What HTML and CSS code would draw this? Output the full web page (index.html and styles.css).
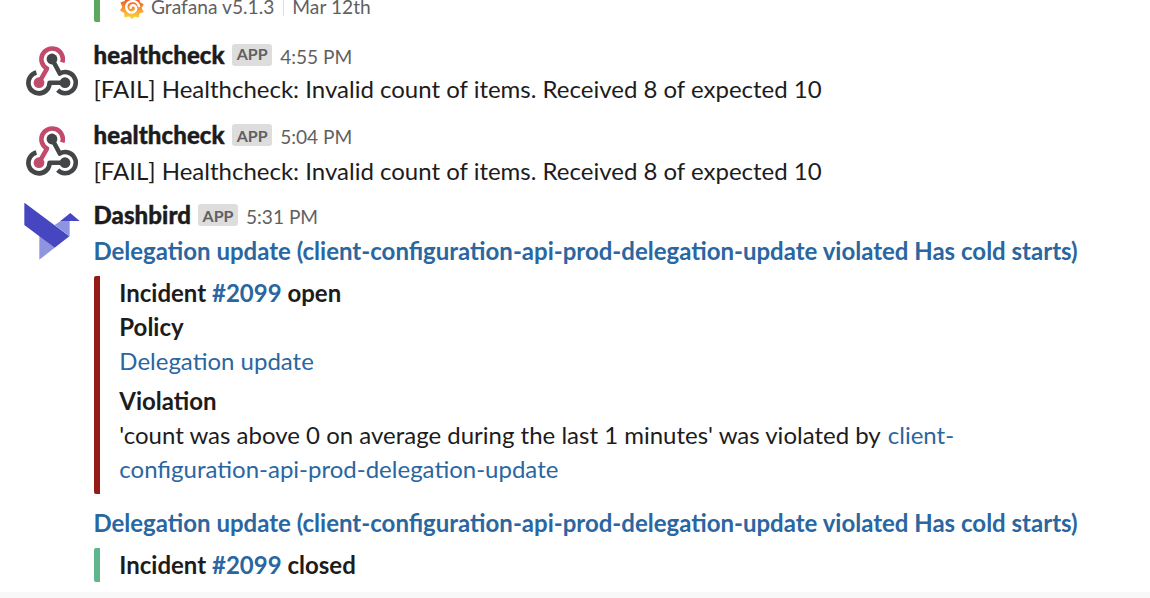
FILE: index.html
```html
<!DOCTYPE html>
<html lang="en">
<head>
<meta charset="utf-8">
<title>Alerts channel</title>
<link rel="stylesheet" href="styles.css">
</head>
<body>
<svg class="defs" width="0" height="0" aria-hidden="true">
  <symbol id="webhook" viewBox="0 0 56 56">
    <g fill="none" stroke-width="4.6" stroke-linejoin="round">
      <path stroke="#c24b6c" d="M38.300 18.400A10.700 10.700 0 1 0 23 24.600L15 38.700"/>
      <path stroke="#444546" d="M12.400 28.500A10.600 10.600 0 1 0 25.600 38.700H41"/>
      <path stroke="#444546" d="M33.700 46.200A10.600 10.600 0 1 0 35.800 29.500L28 15"/>
    </g>
    <circle cx="15" cy="38.700" r="5.400" fill="#c24b6c"/>
    <circle cx="28" cy="15" r="5.400" fill="#444546"/>
    <circle cx="41" cy="38.700" r="5.400" fill="#444546"/>
  </symbol>
</svg>
<main class="channel">
  <div class="attachment grafana">
    <svg class="grafana-logo" viewBox="0 0 24 24">
      <defs><linearGradient id="sun" x1="0" y1="0" x2="0" y2="1"><stop offset="0.200" stop-color="#ee5a2b"/><stop offset="1" stop-color="#fcdb3a"/></linearGradient></defs>
      <path fill="url(#sun)" d="M12 0l2.5 3.2 5-1 .3 4.8 4 2.5-2.200 3.500 2.200 4-4.200 1.500-.8 4.300-4-1L12 24l-3-2.400-4.500.8-.3-4.300L0 15.500l2.300-3.600L.5 7.500l4.200-1.600.8-4.200 4 1z"/>
      <path fill="none" stroke="#fff" stroke-width="2.500" stroke-linecap="round" d="M19 11C18 7.500 14.700 5.600 11.600 6.100 8 6.700 5.900 9.500 6.300 12.800c.4 3 3 5.100 5.900 4.700 2.500-.3 4.200-2.300 3.900-4.500-.3-1.900-2-3-3.700-2.700-1.300.2-2 1.300-1.700 2.400"/>
    </svg>
    <span>Grafana v5.1.3</span><span class="divider"></span><span>Mar 12th</span>
  </div>

  <article class="message first">
    <svg class="avatar"><use href="#webhook"/></svg>
    <div class="content">
      <header class="meta"><b class="name">healthcheck</b><span class="badge">APP</span><time>4:55 PM</time></header>
      <p class="text">[FAIL] Healthcheck: Invalid count of items. Received 8 of expected 10</p>
    </div>
  </article>

  <article class="message second">
    <svg class="avatar"><use href="#webhook"/></svg>
    <div class="content">
      <header class="meta"><b class="name">healthcheck</b><span class="badge">APP</span><time>5:04 PM</time></header>
      <p class="text">[FAIL] Healthcheck: Invalid count of items. Received 8 of expected 10</p>
    </div>
  </article>

  <article class="message third">
    <svg class="avatar bird" viewBox="27 24 168 171">
      <path fill="#8f94e0" d="M119 90L140 76H164V124zM73 122L119 158 73 194z"/>
      <path fill="#4546c0" d="M28 23L163 124 119 158 28 90zM166 54L194 78H136z"/>
    </svg>
    <div class="content">
      <header class="meta"><b class="name dashbird">Dashbird</b><span class="badge">APP</span><time>5:31 PM</time></header>
      <a class="title">Delegation update (client-configuration-api-prod-delegation-update violated Has cold starts)</a>
      <section class="attachment open">
        <p class="strong">Incident <a>#2099</a> open</p>
        <p class="strong">Policy</p>
        <p><a>Delegation update</a></p>
        <p class="strong violation">Violation</p>
        <p>'count was above 0 on average during the last 1 minutes' was violated by <a><span class="lead">client-</span><br>configuration-api-prod-delegation-update</a></p>
      </section>
      <a class="title">Delegation update (client-configuration-api-prod-delegation-update violated Has cold starts)</a>
      <section class="attachment closed">
        <p class="strong">Incident <a>#2099</a> closed</p>
      </section>
    </div>
  </article>
  <div class="bottom-strip"></div>
</main>
</body>
</html>
```
FILE: styles.css
```css
body {
  margin: 0;
  background: #fff;
  color: #1d1c1d;
  font: 24px/34px Lato, sans-serif;
}

.defs { position: absolute; }

.channel {
  height: 598px;
  overflow: hidden;
  display: flex;
  flex-direction: column;
}

p { margin: 0; white-space: nowrap; }

a { color: #2a66a0; }

.text,
.title { margin-left: -0.6px; }

.attachment {
  border-left: 6px solid #951b16;
  border-radius: 2px;
  padding-left: 19.3px;
}

.grafana {
  display: flex;
  align-items: center;
  box-sizing: border-box;
  height: 36px;
  margin: -14px 0 0 94px;
  padding: 6px 0 0 20px;
  border-color: #5ba85e;
  color: #616061;
  font-size: 19.2px;
  line-height: 30px;
  flex: none;
}

.grafana-logo {
  width: 24px;
  height: 24px;
  margin-right: 7px;
}

.divider {
  width: 1px;
  height: 18px;
  margin: 0 8px 0 9px;
  background: #ddd;
}

.message {
  display: flex;
  flex: none;
  padding-left: 24px;
}

.first { margin-top: 14px; }
.second { margin-top: 10px; }
.third { margin-top: 8px; }

.avatar {
  width: 56px;
  height: 56px;
  margin: 8px 14px 0 0;
  flex: none;
}

.bird {
  height: 57px;
  margin-top: 7px;
}

.meta {
  display: flex;
  align-items: center;
  height: 36px;
}

.second .meta,
.third .meta { padding-bottom: 2px; }

.name {
  padding-top: 2px;
  margin-left: -0.5px;
  font-weight: 900;
  letter-spacing: 0.08px;
  -webkit-text-stroke: 0.4px currentColor;
}

.badge {
  align-self: flex-start;
  height: 22px;
  margin: 8px 8px 0 7.500px;
  padding: 0 4.500px;
  border-radius: 3px;
  background: #ddd;
  color: #616061;
  font-size: 16px;
  font-weight: 700;
  line-height: 22px;
}

.first .badge { line-height: 20px; }
.second .badge,
.third .badge { line-height: 23px; }

.dashbird + .badge { margin-left: 7px; }

time {
  padding-top: 5px;
  color: #616061;
  font-size: 19.1px;
}

.title {
  display: block;
  margin-bottom: 8px;
  font-weight: 700;
  white-space: nowrap;
}

.strong { font-weight: 700; }

.violation { margin-top: 6px; }

.lead { margin-left: 1.5px; }

.open {
  margin-bottom: 12px;
  padding-bottom: 8px;
}

.closed { border-color: #5fb58c; }

.bottom-strip {
  height: 6px;
  margin-top: 10px;
  background: #f8f8f8;
  flex: none;
}
```
